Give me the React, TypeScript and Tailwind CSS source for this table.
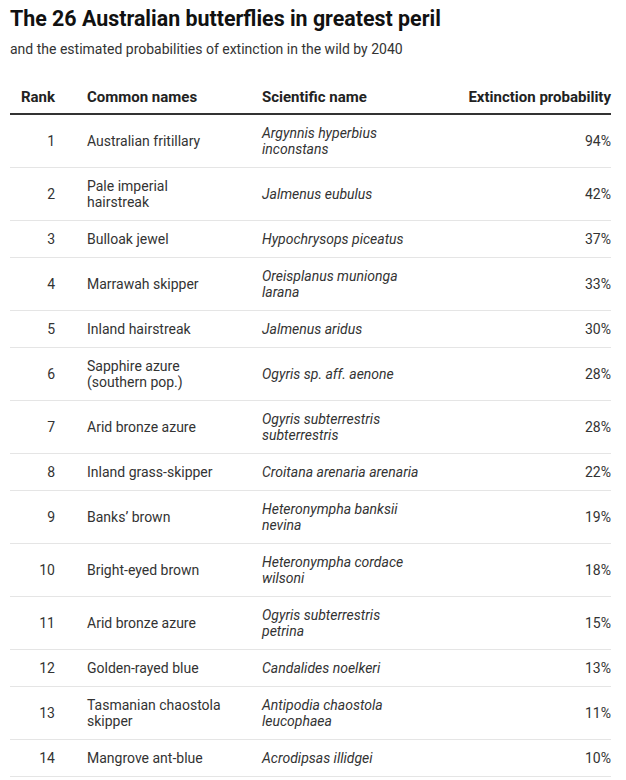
import React from "react";

const rows: [string, string, string, string][] = [
  ["1", "Australian fritillary", "Argynnis hyperbius inconstans", "94%"],
  ["2", "Pale imperial hairstreak", "Jalmenus eubulus", "42%"],
  ["3", "Bulloak jewel", "Hypochrysops piceatus", "37%"],
  ["4", "Marrawah skipper", "Oreisplanus munionga larana", "33%"],
  ["5", "Inland hairstreak", "Jalmenus aridus", "30%"],
  ["6", "Sapphire azure (southern pop.)", "Ogyris sp. aff. aenone", "28%"],
  ["7", "Arid bronze azure", "Ogyris subterrestris subterrestris", "28%"],
  ["8", "Inland grass-skipper", "Croitana arenaria arenaria", "22%"],
  ["9", "Banks’ brown", "Heteronympha banksii nevina", "19%"],
  ["10", "Bright-eyed brown", "Heteronympha cordace wilsoni", "18%"],
  ["11", "Arid bronze azure", "Ogyris subterrestris petrina", "15%"],
  ["12", "Golden-rayed blue", "Candalides noelkeri", "13%"],
  ["13", "Tasmanian chaostola skipper", "Antipodia chaostola leucophaea", "11%"],
  ["14", "Mangrove ant-blue", "Acrodipsas illidgei", "10%"],
];

export default function App() {
  return (
    <div
      className="w-[626px] min-h-[780px] bg-white text-[#333]"
      style={{ fontFamily: "Roboto, 'Liberation Sans', sans-serif" }}
    >
      <div className="px-[10px] pt-[5px]">
        <h1 className="text-[21.4px] leading-[28px] font-bold text-[#111]">
          The 26 Australian butterflies in greatest peril
        </h1>
        <p className="mt-[7px] text-[14px] leading-[18px] text-[#333]">
          and the estimated probabilities of extinction in the wild by 2040
        </p>
        <div className="mt-[31px] mr-[5px]">
          <div className="grid grid-cols-[45px_207px_170px_1fr] items-end border-b-2 border-[#333] pb-[8px] text-[15px] leading-[16px] font-bold text-[#222]">
            <div className="text-right">Rank</div>
            <div className="pl-[32px]">Common names</div>
            <div>Scientific name</div>
            <div className="text-right">Extinction probability</div>
          </div>
          {rows.map((r) => (
            <div
              key={r[0]}
              className="grid grid-cols-[45px_207px_170px_1fr] items-center border-b border-[#e5e5e5] py-[10px] text-[14px] leading-[16px] text-[#333]"
            >
              <div className="text-right">{r[0]}</div>
              <div className="pl-[32px] pr-[35px]">{r[1]}</div>
              <div className="italic pr-[10px]">{r[2]}</div>
              <div className="text-right">{r[3]}</div>
            </div>
          ))}
        </div>
      </div>
    </div>
  );
}
